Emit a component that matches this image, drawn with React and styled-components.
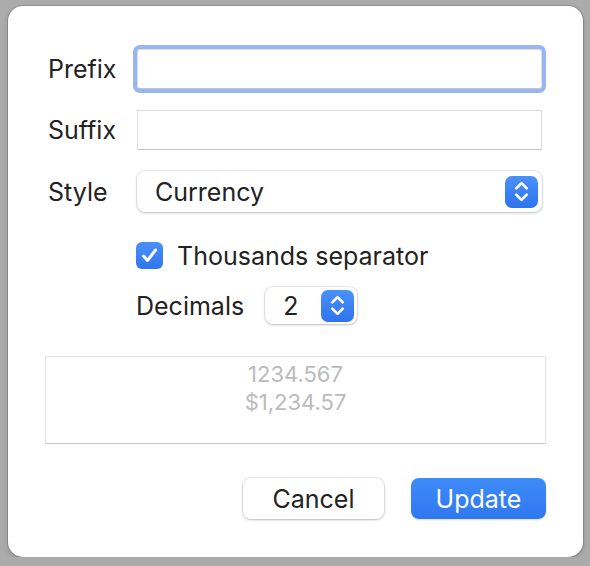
import styled, { createGlobalStyle } from 'styled-components';

const GlobalStyle = createGlobalStyle`
    html, body {
        margin: 0;
        padding: 0;
        background: #ababab;
    }
    body {
        font-family: Inter, "Liberation Sans", sans-serif;
        color: #222;
    }
`;

const Chevrons = () => (
    <svg width='17' height='23' viewBox='0 0 16 22' fill='none'>
        <path d='M3 8 L8 3 L13 8' stroke='#fff' strokeWidth='2.6' strokeLinecap='round' strokeLinejoin='round' />
        <path d='M3 14 L8 19 L13 14' stroke='#fff' strokeWidth='2.6' strokeLinecap='round' strokeLinejoin='round' />
    </svg>
);

const App = () => {
    return (
        <>
            <GlobalStyle />
            <Dialog>
                <Form>
                    <Label>Prefix</Label>
                    <TextField $focused />
                    <Label>Suffix</Label>
                    <TextField />
                    <Label>Style</Label>
                    <Popup>
                        <PopupText>Currency</PopupText>
                        <Stepper>
                            <Chevrons />
                        </Stepper>
                    </Popup>
                    <Options>
                        <CheckRow>
                            <Checkbox>
                                <svg width='19' height='19' viewBox='0 0 19 19' fill='none'>
                                    <path d='M3.5 10 L7.5 14.5 L15.5 4' stroke='#fff' strokeWidth='3' strokeLinecap='round' strokeLinejoin='round' />
                                </svg>
                            </Checkbox>
                            <span>Thousands separator</span>
                        </CheckRow>
                        <DecimalsRow>
                            <span>Decimals</span>
                            <SmallPopup>
                                <PopupText>2</PopupText>
                                <Stepper>
                                    <Chevrons />
                                </Stepper>
                            </SmallPopup>
                        </DecimalsRow>
                    </Options>
                </Form>
                <Preview>
                    <div>1234.567</div>
                    <div>$1,234.57</div>
                </Preview>
                <Buttons>
                    <Button>Cancel</Button>
                    <Button $primary>Update</Button>
                </Buttons>
            </Dialog>
        </>
    );
};

export default App;

const Dialog = styled.div`
    box-sizing: border-box;
    width: 575px;
    height: 551px;
    margin: 6px 0 0 8px;
    padding: 43px 37px 0 37px;
    background: #fff;
    border-radius: 15px;
    box-shadow: 0 0 0 1px rgba(0, 0, 0, 0.12), 0 2px 5px rgba(0, 0, 0, 0.18);
    display: flex;
    flex-direction: column;
`;

const Form = styled.div`
    display: grid;
    grid-template-columns: 89px 1fr;
    grid-template-rows: 40px 40px 41px auto;
    row-gap: 21px;
    align-items: center;
    margin: 0 4px 0 3px;
    font-size: 25px;
`;

const Label = styled.div`
    line-height: 40px;
`;

const TextField = styled.div`
    box-sizing: border-box;
    height: 40px;
    background: #fff;
    border: 1px solid #dcdcdc;
    border-bottom-color: #c4c4c4;
    border-radius: ${(p) => (p.$focused ? '3px' : '0')};
    box-shadow: ${(p) => (p.$focused ? '0 0 0 4px #98b6f3' : 'none')};
`;

const Popup = styled.div`
    box-sizing: border-box;
    height: 41px;
    display: flex;
    align-items: center;
    justify-content: space-between;
    padding: 0 4px 0 18px;
    background: #fff;
    border-radius: 8px;
    box-shadow: 0 0 0 1px rgba(0, 0, 0, 0.07), 0 1px 3px rgba(0, 0, 0, 0.2);
`;

const SmallPopup = styled(Popup)`
    width: 92px;
    height: 37px;
    padding: 0 3px 0 18px;
`;

const PopupText = styled.span`
    font-size: 25px;
    color: #222;
`;

const Stepper = styled.div`
    width: 33px;
    height: 32px;
    border-radius: 7px;
    background: linear-gradient(#4b90f9, #2d74ef);
    display: flex;
    align-items: center;
    justify-content: center;
`;

const Options = styled.div`
    grid-column: 2;
    display: flex;
    flex-direction: column;
    padding-top: 9px;
    margin-left: -1px;
`;

const CheckRow = styled.div`
    display: flex;
    align-items: center;
    gap: 14px;
    height: 27px;
`;

const Checkbox = styled.div`
    width: 27px;
    height: 27px;
    border-radius: 6px;
    background: linear-gradient(#4b90f9, #2f76f0);
    display: flex;
    align-items: center;
    justify-content: center;
`;

const DecimalsRow = styled.div`
    display: flex;
    align-items: center;
    gap: 21px;
    margin-top: 18px;
`;

const Preview = styled.div`
    box-sizing: border-box;
    height: 88px;
    margin-top: 32px;
    padding-top: 3px;
    border: 1px solid #e4e4e4;
    border-bottom-color: #c9c9c9;
    text-align: center;
    font-size: 22px;
    line-height: 28px;
    color: #bbbbbb;
`;

const Buttons = styled.div`
    display: flex;
    justify-content: flex-end;
    gap: 27px;
    margin-top: 34px;
`;

const Button = styled.button`
    box-sizing: border-box;
    height: 41px;
    width: ${(p) => (p.$primary ? '135px' : '141px')};
    font-family: Inter, "Liberation Sans", sans-serif;
    font-size: 25px;
    border-radius: 8px;
    border: none;
    color: ${(p) => (p.$primary ? '#fff' : '#222')};
    background: ${(p) => (p.$primary ? 'linear-gradient(#3f8bf8, #2f78f0)' : '#fff')};
    box-shadow: ${(p) =>
        p.$primary
            ? '0 1px 2px rgba(0, 0, 0, 0.15)'
            : '0 0 0 1px rgba(0, 0, 0, 0.08), 0 1px 3px rgba(0, 0, 0, 0.2)'};
`;
